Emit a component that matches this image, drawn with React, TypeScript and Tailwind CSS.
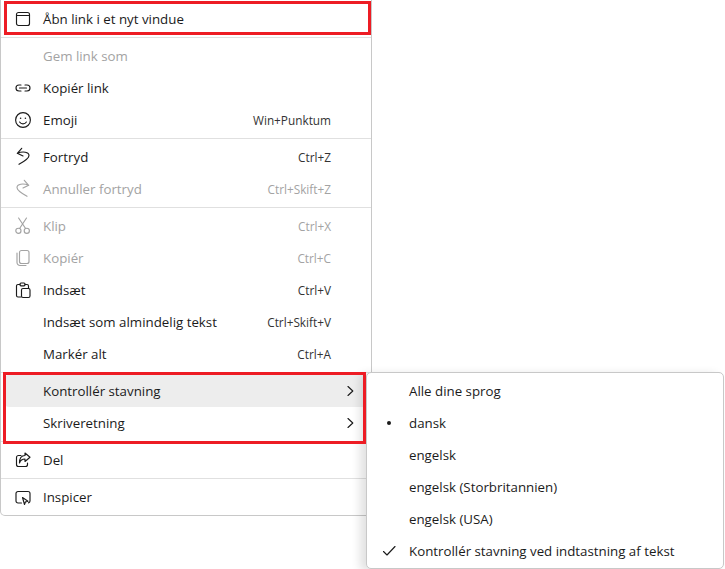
import type { ReactNode } from "react";

const stroke = {
  fill: "none",
  stroke: "currentColor",
  strokeWidth: 1.15,
  strokeLinecap: "round" as const,
  strokeLinejoin: "round" as const,
};

function Icon({ children }: { children: ReactNode }) {
  return (
    <svg viewBox="0 0 16 16" className="w-4 h-4 shrink-0 overflow-visible" {...stroke}>
      {children}
    </svg>
  );
}

const WindowIcon = () => (
  <Icon>
    <rect x="1.5" y="1.5" width="13" height="13" rx="2" />
    <path d="M1.5 4.5H14.5" />
  </Icon>
);
const LinkIcon = () => (
  <Icon>
    <path d="M6 5H4a3 3 0 0 0 0 6h2M10 5h2a3 3 0 0 1 0 6h-2M4.5 8h7" />
  </Icon>
);
const SmileIcon = () => (
  <Icon>
    <circle cx="8" cy="8" r="7.4" />
    <circle cx="5.6" cy="6.2" r="0.8" fill="currentColor" stroke="none" />
    <circle cx="10.4" cy="6.2" r="0.8" fill="currentColor" stroke="none" />
    <path d="M4.6 10a4 4 0 0 0 6.8 0" />
  </Icon>
);
const UndoIcon = () => (
  <Icon>
    <path d="M6.7-.7 2.300 4.300 8 7M2.300 4.300C8 2 14 3 14 6.500 14 9 10 12 4 15.300" />
  </Icon>
);
const RedoIcon = () => (
  <Icon>
    <g transform="matrix(-1 0 0 1 16 0)">
      <path d="M6.7-.7 2.300 4.300 8 7M2.300 4.300C8 2 14 3 14 6.500 14 9 10 12 4 15.300" />
    </g>
  </Icon>
);
const ScissorsIcon = () => (
  <Icon>
    <circle cx="3.4" cy="12.8" r="2.6" />
    <circle cx="11.8" cy="12.8" r="2.6" />
    <path d="M4.6 10.5 11.5 0M10.6 10.5 3.6 0" />
  </Icon>
);
const CopyIcon = () => (
  <Icon>
    <rect x="4.5" y="0.5" width="9.5" height="13" rx="2" />
    <path d="M2 3v9.500a3 3 0 0 0 3 3h6" />
  </Icon>
);
const PasteIcon = () => (
  <Icon>
    <path d="M5 2.500H3A1.500 1.500 0 0 0 1.500 4v9.500A1.500 1.500 0 0 0 3 15h3M10 2.500h2A1.500 1.500 0 0 1 13.500 4v2.500" />
    <rect x="5" y="1" width="5" height="2.800" rx="1" />
    <rect x="6.500" y="6.500" width="8.500" height="9" rx="1.500" />
  </Icon>
);
const ShareIcon = () => (
  <Icon>
    <path d="M6 3.500H3.500a2 2 0 0 0-2 2v7a2 2 0 0 0 2 2h7a2 2 0 0 0 2-2V11" />
    <path d="M10 1l5 4.200-5 4.300V7C7 7 5.500 8 4.500 11c0-4.500 2-7.500 5.500-7.500z" />
  </Icon>
);
const InspectIcon = () => (
  <Icon>
    <path d="M6.500 14H3a2 2 0 0 1-2-2V4.500a2 2 0 0 1 2-2h10a2 2 0 0 1 2 2V12a2 2 0 0 1-1.500 1.900" />
    <path d="M7.500 8.500 13 12.200l-2.500.7-1 2.600z" />
  </Icon>
);
const ChevronIcon = () => (
  <svg viewBox="0 0 8 12" className="w-2 h-3 shrink-0" {...stroke}>
    <path d="M2 1.500l4.800 4.500-4.800 4.500" />
  </svg>
);

type Item = {
  label: string;
  icon?: ReactNode;
  shortcut?: string;
  disabled?: boolean;
  active?: boolean;
  sub?: boolean;
};

function Separator() {
  return <div className="h-px bg-[#e0e0e0] my-[2px]" />;
}

function MenuRow({ label, icon, shortcut, disabled, active, sub }: Item) {
  return (
    <div
      className={`flex items-center h-8 mx-1 pl-[10px] gap-3 rounded-[4px] ${active ? "bg-[#ededed]" : ""} ${
        disabled ? "text-[#a3a3a3]" : "text-[#1b1b1b]"
      }`}
    >
      <span className="w-4 h-4 shrink-0 flex items-center justify-center">{icon}</span>
      <span className="flex-1 pt-[2px]">{label}</span>
      {shortcut && (
        <span className={`text-[11.8px] pt-[2px] mr-[36px] ${disabled ? "text-[#a3a3a3]" : "text-[#333333]"}`}>
          {shortcut}
        </span>
      )}
      {sub && (
        <span className="mr-[13px]">
          <ChevronIcon />
        </span>
      )}
    </div>
  );
}

function SubRow({ label, mark }: { label: string; mark?: ReactNode }) {
  return (
    <div className="flex items-center h-8 mx-1 pl-[10px] gap-3 text-[#1b1b1b]">
      <span className="w-4 h-4 shrink-0 flex items-center justify-center">{mark}</span>
      <span className="pt-[2px]">{label}</span>
    </div>
  );
}

export default function App() {
  return (
    <div className="relative w-[725px] h-[569px] overflow-hidden bg-white text-[13.3px] font-['Open_Sans','Liberation_Sans',sans-serif]">
      <div className="w-[372px] h-[516px] pt-[3px] border-x border-b border-[#c8c8c8] rounded-b-[5px] bg-white">
        <MenuRow label="Åbn link i et nyt vindue" icon={<WindowIcon />} />
        <Separator />
        <MenuRow label="Gem link som" disabled />
        <MenuRow label="Kopiér link" icon={<LinkIcon />} />
        <MenuRow label="Emoji" icon={<SmileIcon />} shortcut="Win+Punktum" />
        <Separator />
        <MenuRow label="Fortryd" icon={<UndoIcon />} shortcut="Ctrl+Z" />
        <MenuRow label="Annuller fortryd" icon={<RedoIcon />} shortcut="Ctrl+Skift+Z" disabled />
        <Separator />
        <MenuRow label="Klip" icon={<ScissorsIcon />} shortcut="Ctrl+X" disabled />
        <MenuRow label="Kopiér" icon={<CopyIcon />} shortcut="Ctrl+C" disabled />
        <MenuRow label="Indsæt" icon={<PasteIcon />} shortcut="Ctrl+V" />
        <MenuRow label="Indsæt som almindelig tekst" shortcut="Ctrl+Skift+V" />
        <MenuRow label="Markér alt" shortcut="Ctrl+A" />
        <Separator />
        <MenuRow label="Kontrollér stavning" sub active />
        <MenuRow label="Skriveretning" sub />
        <Separator />
        <MenuRow label="Del" icon={<ShareIcon />} />
        <Separator />
        <MenuRow label="Inspicer" icon={<InspectIcon />} />
      </div>

      {/* undermenu */}
      <div className="absolute left-[366px] top-[372px] w-[358px] h-[197px] pt-[2px] border border-[#c8c8c8] rounded-[5px] bg-white shadow-[-6px_2px_10px_rgba(0,0,0,0.12)]">
        <SubRow label="Alle dine sprog" />
        <SubRow label="dansk" mark={<span className="w-1 h-1 rounded-full bg-[#1b1b1b]" />} />
        <SubRow label="engelsk" />
        <SubRow label="engelsk (Storbritannien)" />
        <SubRow label="engelsk (USA)" />
        <SubRow
          label="Kontrollér stavning ved indtastning af tekst"
          mark={
            <svg viewBox="0 0 16 16" className="w-4 h-4" {...stroke}>
              <path d="M2.500 8.500 6 12l8-8.500" />
            </svg>
          }
        />
      </div>

      {/* røde markeringer */}
      <div className="absolute left-1 top-px w-[367px] h-[34px] border-[3px] border-[#ed1c24]" />
      <div className="absolute left-[3px] top-[372px] w-[363px] h-[72px] border-[3px] border-[#ed1c24]" />
    </div>
  );
}
